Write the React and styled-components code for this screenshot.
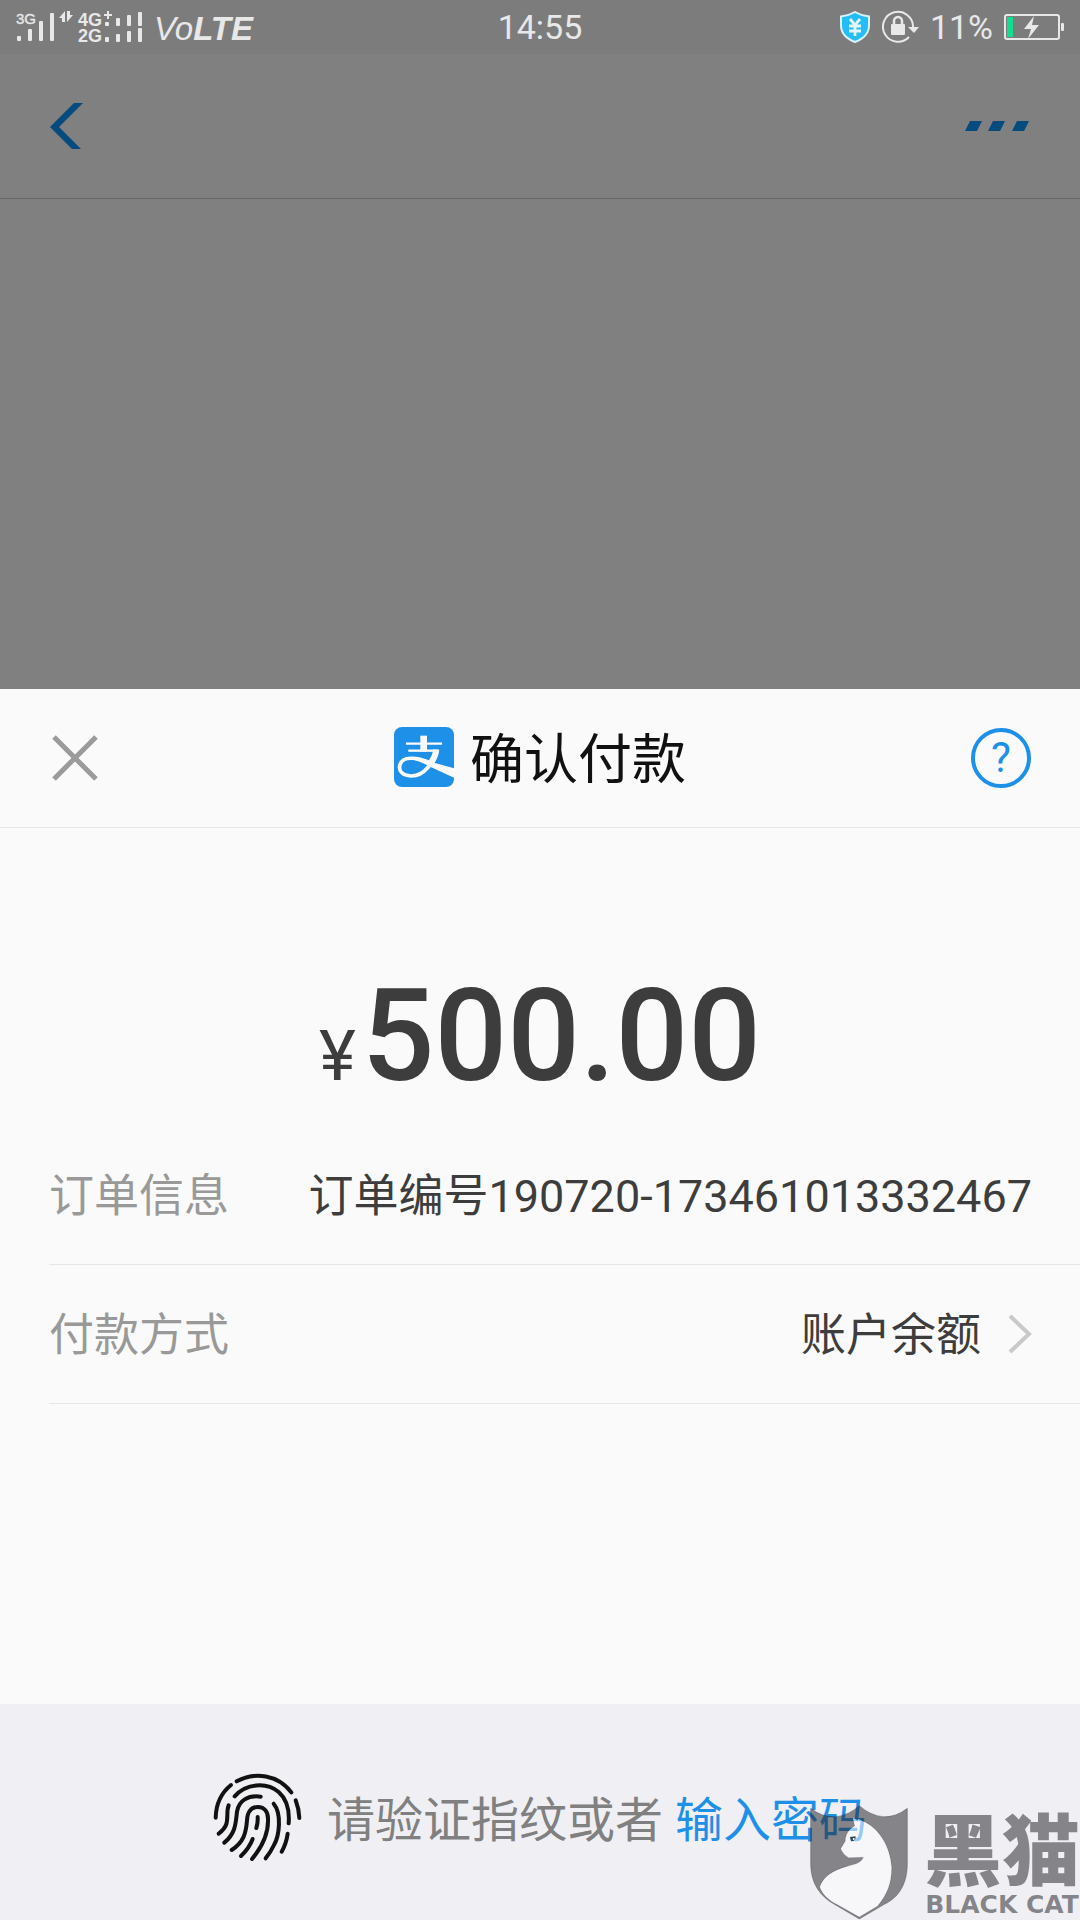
import React from "react";
import styled, { createGlobalStyle } from "styled-components";

const blue = "#1e90e8";
const ink = "#3d3d3d";
const line = "#e6e6e6";
const pale = "#e8e8e8";

const GlobalStyle = createGlobalStyle`
  * { box-sizing: border-box; }
  body {
    margin: 0;
    background: #808080;
    font-family: Roboto, "Noto Sans CJK SC", sans-serif;
    color: ${ink};
  }
`;

const Page = styled.div`
  position: relative;
  min-height: 100vh;
  display: flex;
  flex-direction: column;
  overflow: hidden;
`;

const StatusBar = styled.div`
  height: 54px;
  padding: 0 16px;
  display: grid;
  grid-template-columns: 1fr auto 1fr;
  align-items: center;
  background: #7c7c7c;
  color: ${pale};
  font-size: 34px;
  line-height: 54px;
`;

const StatusGroup = styled.div`
  display: flex;
  align-items: center;
  justify-content: ${(p) => (p.$end ? "flex-end" : "flex-start")};
  gap: ${(p) => (p.$end ? "11px" : "10px")};
  svg { display: block; flex: none; }
`;

const Carrier = styled.span`
  padding-top: 4px;
  font: italic 400 33px/50px "Liberation Sans", sans-serif;
  b { font-weight: 700; }
`;

const Charge = styled.span`
  font-size: 34px;
`;

const NavBar = styled.header`
  height: 145px;
  padding: 0 50px;
  display: flex;
  align-items: center;
  justify-content: space-between;
  border-bottom: 1px solid #666;
`;

const IconButton = styled.button`
  padding: 0;
  border: 0;
  background: none;
  display: block;
  cursor: pointer;
  svg { display: block; }
`;

const Backdrop = styled.div`
  flex: 1;
`;

const Sheet = styled.main`
  background: #fafafa;
`;

const SheetHeader = styled.header`
  height: 139px;
  padding: 0 49px;
  display: grid;
  grid-template-columns: 1fr auto 1fr;
  align-items: center;
  justify-items: start;
  border-bottom: 1px solid ${line};
`;

const Title = styled.h1`
  margin: 0;
  padding-bottom: 2px;
  display: flex;
  align-items: center;
  gap: 16px;
  font-size: 54px;
  line-height: 80px;
  font-weight: 400;
  color: #111;
`;

const TitleText = styled.span`
  padding-top: 8px;
`;

const HelpButton = styled.button`
  justify-self: end;
  width: 60px;
  height: 60px;
  padding: 0;
  border: 4px solid ${blue};
  border-radius: 50%;
  background: none;
  color: ${blue};
  font: 400 42px/52px Roboto, sans-serif;
  cursor: pointer;
`;

const Amount = styled.p`
  margin: 0;
  padding: 132px 0 14px;
  display: flex;
  align-items: baseline;
  justify-content: center;
  gap: 6px;
  font-weight: 500;
  font-size: 128px;
  line-height: 152px;
`;

const Currency = styled.span`
  font-size: 70px;
  line-height: 80px;
  font-weight: 400;
`;

const Details = styled.div`
  padding: 0 0 300px 49px;
`;

const Row = styled.div`
  height: 139px;
  padding-right: 48px;
  display: flex;
  align-items: center;
  justify-content: space-between;
  border-bottom: 1px solid ${line};
  font-size: 45px;
  line-height: 66px;
`;

const Label = styled.span`
  padding-top: 4px;
  color: #999;
`;

const Value = styled.span`
  padding-top: 4px;
`;

const MethodButton = styled.button`
  padding: 0;
  border: 0;
  background: none;
  display: flex;
  align-items: center;
  gap: 27px;
  color: inherit;
  font: inherit;
  cursor: pointer;
`;

const Footer = styled.footer`
  height: 216px;
  padding-top: 10px;
  display: flex;
  align-items: center;
  justify-content: center;
  background: #efeff4;
  color: #808080;
  font-size: 48px;
  line-height: 70px;
`;

const Prompt = styled.span`
  margin: 0 12px 0 24px;
  padding-top: 8px;
`;

const PasswordLink = styled.a`
  padding-top: 8px;
  color: ${blue};
  text-decoration: none;
`;

const Watermark = styled.div`
  position: absolute;
  right: 0;
  bottom: 0;
  display: flex;
  align-items: flex-end;
  gap: 16px;
  pointer-events: none;
  color: rgba(40, 38, 42, 0.53);
  svg { display: block; }
`;

const Brand = styled.div`
  display: flex;
  flex-direction: column;
  align-items: center;
  white-space: nowrap;
`;

const BrandName = styled.span`
  font: 900 78px/88px "Noto Sans CJK SC", sans-serif;
`;

const BrandLatin = styled.span`
  font: 700 25px/30px "DejaVu Sans", sans-serif;
`;

const SignalIcon = () => (
  <svg width="128" height="38" viewBox="0 -2 128 38" fill={pale} fontFamily="Liberation Sans, sans-serif">
    <text x="0" y="14" fontSize="15" stroke={pale} strokeWidth=".4">3G</text>
    <rect x="1" y="26" width="4" height="5" rx="1" />
    <rect x="12" y="19" width="4" height="12" rx="1" />
    <rect x="23" y="11" width="4" height="20" rx="1" />
    <rect x="34" y="3" width="4" height="28" rx="1" />
    <path d="M43 8l6-7v11h-3V8zM51 1v11l6-7h-3V1z" />
    <text x="62" y="16" fontSize="18" fontWeight="700">4G</text>
    <text x="62" y="32" fontSize="18" fontWeight="700">2G</text>
    <path d="M88 4h3V1h2v3h3v2h-3v3h-2V6h-3z" />
    <rect x="89" y="12" width="4" height="4" rx="1" />
    <rect x="100" y="8" width="4" height="8" rx="1" />
    <rect x="111" y="5" width="4" height="11" rx="1" />
    <rect x="122" y="2" width="4" height="14" rx="1" />
    <rect x="89" y="27" width="4" height="5" rx="1" />
    <rect x="100" y="24" width="4" height="8" rx="1" />
    <rect x="111" y="21" width="4" height="11" rx="1" />
    <rect x="122" y="18" width="4" height="14" rx="1" />
  </svg>
);

const ShieldIcon = () => (
  <svg width="32" height="32" viewBox="0 0 32 32">
    <path d="M16 1q7 4 14 4.500v9q0 11-14 16.500Q2 25.500 2 14.500v-9Q9 5 16 1z" fill="#24bdf5" stroke="#d9f3fc" strokeWidth="2" />
    <path d="M11 8l5 6 5-6M10 15h12M10 20h12M16 14v11" fill="none" stroke="#e2f6fd" strokeWidth="2.800" />
  </svg>
);

const RotationLockIcon = () => (
  <svg width="37" height="34" viewBox="0 0 37 34" fill={pale}>
    <path d="M27 27a15 15 0 1 1 4-10" fill="none" stroke={pale} strokeWidth="2" />
    <path d="M26 17h11l-5 6z" />
    <rect x="9" y="14" width="14" height="11" rx="1" />
    <path d="M12 15v-4a4 4 0 0 1 8 0v4" fill="none" stroke={pale} strokeWidth="2.500" />
  </svg>
);

const BatteryIcon = () => (
  <svg width="60" height="28" viewBox="0 0 60 28">
    <rect x="1" y="2" width="54" height="24" rx="2" fill="none" stroke={pale} strokeWidth="2" />
    <rect x="57" y="10" width="3" height="8" rx="1" fill={pale} />
    <rect x="3" y="4" width="6" height="20" fill="#12dd90" />
    <path d="M30 3L20 16h7l-3 10 11-14h-7z" fill={pale} />
  </svg>
);

const AlipayLogo = () => (
  <svg width="60" height="60" viewBox="0 0 180 180" aria-hidden="true">
    <rect width="180" height="180" rx="24" fill={blue} />
    <g fill="none" stroke="#fafafa">
      <path d="M89 26v48" strokeWidth="20" />
      <path d="M36 50h108" strokeWidth="7" />
      <path d="M43 71h92" strokeWidth="7" />
      <path d="M127 70C121 104 91 148 51 147 26 146 12 132 18 113 25 88 65 88 114 109" strokeWidth="11" />
      <path d="M127 68C125 85 119 96 112 106" strokeWidth="18" />
    </g>
    <path d="M70 90q20 6 50 17l60 17v28l-70-32q-25-14-48-20z" fill="#fafafa" />
  </svg>
);

const FingerprintIcon = () => (
  <svg width="90" height="90" viewBox="40 68 270 270" fill="none" stroke="#111" strokeWidth="12" strokeLinecap="round" aria-hidden="true">
    <path d="M111 96C166 66 235 76 275 129" />
    <path d="M94 107C64 131 49 166 48 205" />
    <path d="M288 153Q298 179 299 206" />
    <path d="M105 141C139 102 200 97 237 128 262 150 270 183 267 222" />
    <path d="M87 168C79 188 87 207 79 227 74 240 66 246 57 253" />
    <path d="M183 142C145 137 117 154 112 187 108 222 108 252 74 280" />
    <path d="M96 302C132 278 139 252 142 213 143 187 155 173 174 173 196 173 205 190 205 208 207 252 187 293 157 329" />
    <path d="M222 163C247 193 239 259 223 287Q213 308 198 327" />
    <path d="M174 203Q175 221 170 236" />
    <path d="M159 269Q149 296 124 320" />
    <path d="M264 253Q260 282 246 307" />
  </svg>
);

const CatShield = () => (
  <svg width="98" height="115" viewBox="452 195 294 345" aria-hidden="true">
    <path
      fill="rgba(40,38,42,.53)"
      fillRule="evenodd"
      stroke="rgba(40,38,42,.3)"
      strokeWidth="3"
      d="M454 205Q488 232 530 230 568 226 600 197 632 226 671 230 710 232 744 205V375C742 442 712 475 675 493L600 537 525 493C485 470 456 435 454 375zM580 232L586 258C565 270 558 287 558 303L544 326Q550 342 568 353L612 352C606 370 583 374 560 380 522 390 491 410 481 441 490 466 512 483 532 493L600 531 655 498C684 463 697 430 697 382 693 319 658 262 609 243L597 236 594 241z"
    />
    <path d="M580 232L586 258C565 270 558 287 558 303L544 326Q550 342 568 353L612 352C606 370 583 374 560 380 522 390 491 410 481 441 490 466 512 483 532 493L600 531 655 498C684 463 697 430 697 382 693 319 658 262 609 243L597 236 594 241z" fill="rgba(255,255,255,.53)" />
    <path d="M572 291l17-2q0 16-14 15z" fill="#345" />
    <circle cx="583" cy="297" r="3" fill="#fff" />
  </svg>
);

export default function App() {
  return (
    <Page>
      <GlobalStyle />
      <StatusBar>
        <StatusGroup>
          <SignalIcon />
          <Carrier>Vo<b>LTE</b></Carrier>
        </StatusGroup>
        <span>14:55</span>
        <StatusGroup $end>
          <ShieldIcon />
          <RotationLockIcon />
          <Charge>11%</Charge>
          <BatteryIcon />
        </StatusGroup>
      </StatusBar>
      <NavBar>
        <IconButton type="button" aria-label="返回">
          <svg width="33" height="48" viewBox="0 0 33 48" fill="#054b7d">
            <path d="M24 1h9L9 25l22 22h-9L0 25z" />
          </svg>
        </IconButton>
        <IconButton type="button" aria-label="更多">
          <svg width="65" height="12" viewBox="0 0 65 12" fill="#054b7d">
            <path d="M5 1h12l-5 10H0zM28 1h12l-5 10H23zM52 1h12l-5 10H47z" />
          </svg>
        </IconButton>
      </NavBar>
      <Backdrop />
      <Sheet>
        <SheetHeader>
          <IconButton type="button" aria-label="关闭">
            <svg width="52" height="48" viewBox="-2 0 52 48" fill="none" stroke="#9b9b9b" strokeWidth="5">
              <path d="M3 3l42 42M45 3L3 45" />
            </svg>
          </IconButton>
          <Title>
            <AlipayLogo />
            <TitleText>确认付款</TitleText>
          </Title>
          <HelpButton type="button" aria-label="帮助">?</HelpButton>
        </SheetHeader>
        <Amount><Currency>¥</Currency>500.00</Amount>
        <Details>
          <Row>
            <Label>订单信息</Label>
            <Value>订单编号190720-173461013332467</Value>
          </Row>
          <Row>
            <Label>付款方式</Label>
            <MethodButton type="button">
              <Value>账户余额</Value>
              <svg width="24" height="40" viewBox="0 0 24 40" fill="none" stroke="#c9c9c9" strokeWidth="4" aria-hidden="true">
                <path d="M2 2l19 18L2 38" />
              </svg>
            </MethodButton>
          </Row>
        </Details>
      </Sheet>
      <Footer>
        <FingerprintIcon />
        <Prompt>请验证指纹或者</Prompt>
        <PasswordLink href="#password">输入密码</PasswordLink>
      </Footer>
      <Watermark>
        <CatShield />
        <Brand>
          <BrandName>黑猫</BrandName>
          <BrandLatin>BLACK CAT</BrandLatin>
        </Brand>
      </Watermark>
    </Page>
  );
}
